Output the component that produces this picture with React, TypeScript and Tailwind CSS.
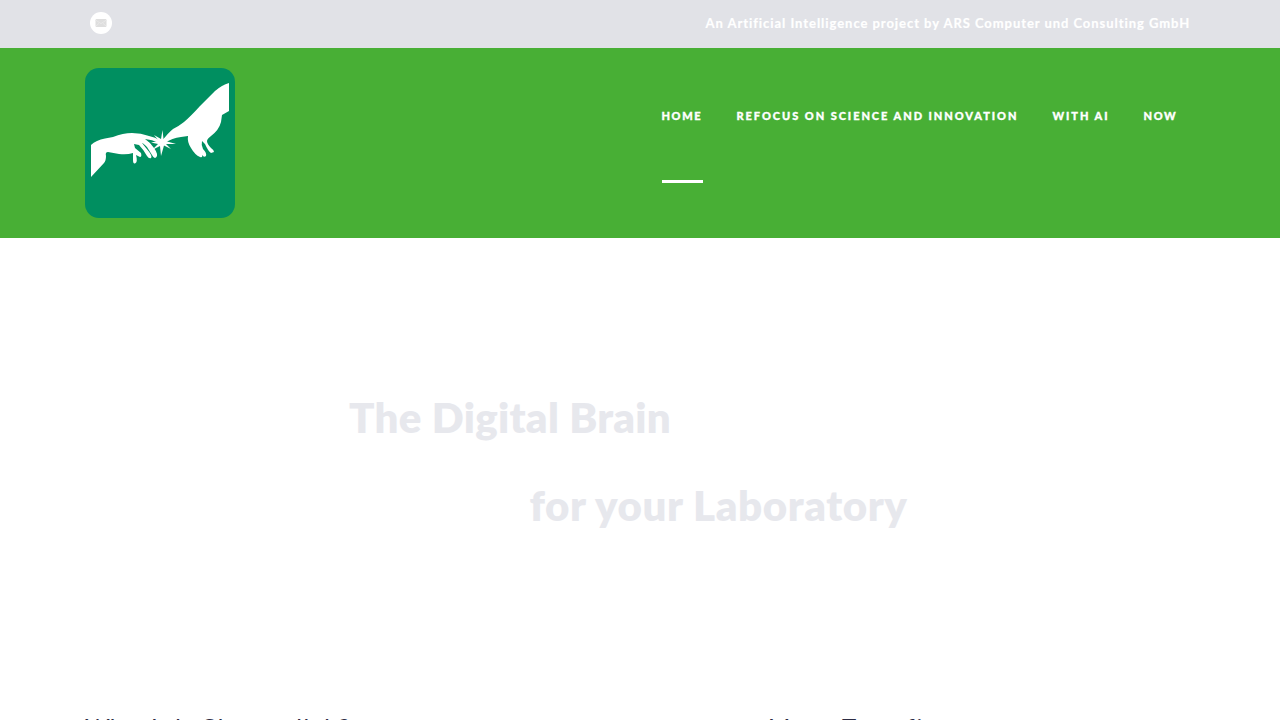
const navItems = [
  { label: "HOME", width: "w-[75px]", tracking: "tracking-[1.6px]", active: true },
  { label: "REFOCUS ON SCIENCE AND INNOVATION", width: "w-[316px]", tracking: "tracking-[1.95px]", active: false },
  { label: "WITH AI", width: "w-[91px]", tracking: "tracking-[1.95px]", active: false },
  { label: "NOW", width: "w-[46px]", tracking: "tracking-[1.65px]", active: false },
];

function MailBadge() {
  return (
    <span className="flex h-[22px] w-[22px] items-center justify-center rounded-full bg-white">
      <svg width="12" height="8" viewBox="0 0 12 8">
        <rect x=".5" width="11" height="8" rx="1.2" fill="#dedede" />
        <path d="M.8 1.2 6 4.6l5.2-3.4M.8 7.2l3.4-3M11.2 7.2l-3.4-3" fill="none" stroke="#ececec" strokeWidth=".7" />
      </svg>
    </span>
  );
}

function Logo() {
  return (
    <svg width="150" height="150" viewBox="0 0 150 150" aria-label="ARS logo">
      <rect width="150" height="150" rx="14" fill="#008f60" />
      <g fill="#fff">
        <path d="M6 77Q11 72 20 70.500L28 69Q38 65 47 65Q56 65 64 68Q70 69 76 73L74 75Q67 71.500 60 71Q66 75 69 80Q74 87 71 89.500Q69 91 67 87L62 79Q58 75 57 75L61 80Q68 88 66 90Q64 91 62 88Q58 81 54 77L49 76L50 80L56 85Q57 89 55 89L51 87Q53 94 50 95.500Q48 96 48 92L48 85Q42 87 34 86L23 84Q20 84 21 88Q21 93 19 95L6 109Z" />
        <path d="M144 15Q137 17 130 23L115 38Q106 48 99 54Q94 58 88 61Q83 65 77 73L80 75Q87 70 96 69L103 68Q102 74 106 80Q110 87 115 89Q118 90 117 87Q119 90 121 88Q122 85 118 81Q116 77 117 73L120 76Q123 83 126 85L129 84Q129 82 126 80Q122 76 122 73Q122 71 126 68Q134 62 136 54L137 47L144 43Z" />
        <path d="M77.500 62 78.500 71 86 65 80.500 73 91 76 81 76 86 81 79 77.500 76 88 75 78 67 82 73 76 66 74.500 74 73 69 67 76 71Z" />
      </g>
    </svg>
  );
}

export default function App() {
  return (
    <div className="h-screen overflow-hidden bg-white font-['Lato',sans-serif]">
      <div className="flex h-12 items-start justify-between bg-[#e1e2e7] pt-3 pr-[89.500px] pl-[90px]">
        <MailBadge />
        <p className="w-[485px] whitespace-nowrap text-[13px] leading-[23px] font-bold tracking-[0.95px] text-white [-webkit-text-stroke:0.2px_white]">
          An Artificial Intelligence project by ARS Computer und Consulting GmbH
        </p>
      </div>
      <header className="flex h-[190px] items-start justify-between bg-[#48af35] pt-5 pr-[90.500px] pl-[85px]">
        <Logo />
        <nav className="flex w-[528px] pt-[38px] text-[11px] leading-5 font-black text-white [-webkit-text-stroke:0.35px_white]">
          {navItems.map((item) => (
            <a key={item.label} href="#" className={`${item.width} shrink-0 whitespace-nowrap`}>
              <span className={item.tracking}>{item.label}</span>
              {item.active && <span className="mt-[54px] block h-[3px] w-[41px] bg-white" />}
            </a>
          ))}
        </nav>
      </header>
      <section className="h-[473px] pt-[149px] text-[42px] leading-[60px] font-extrabold text-[#e7e8ed]">
        <h1 className="pl-[349px] tracking-[0.3px]">The Digital Brain</h1>
        <h1 className="mt-7 pl-[529.500px] tracking-[0.6px]">for your Laboratory</h1>
      </section>
      <section className="flex h-[9px] overflow-hidden text-[24px] leading-[32px] text-[#2c2b43]">
        <h2 className="w-[768px] shrink-0 pl-[85px] whitespace-nowrap">
          <span className="inline-block w-[66px]">Why</span>
          <span className="inline-block w-[49px]">Lab</span>
          <span className="inline-block tracking-[1.6px]">Chemcollab?</span>
        </h2>
        <h2 className="whitespace-nowrap">
          <span className="inline-block w-[74px]">Many</span>
          <span className="tracking-[1.7px]">Transfi</span>
        </h2>
      </section>
    </div>
  );
}
